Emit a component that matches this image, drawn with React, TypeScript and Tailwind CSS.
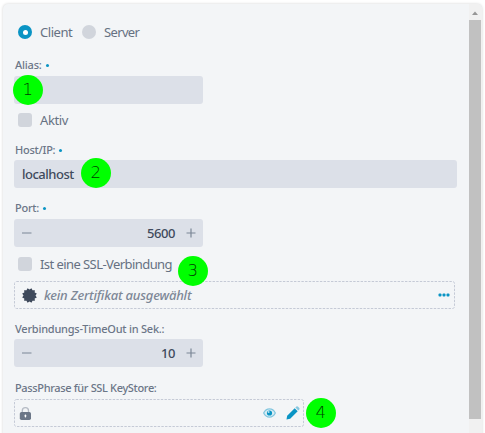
import type { ReactNode } from "react";
import clsx from "clsx";

function Label({ children, required, className }: { children: ReactNode; required?: boolean; className?: string }) {
  return (
    <div className={clsx("flex h-4 items-center whitespace-nowrap pl-px text-[11px] leading-4 font-medium text-[#6b7687]", className)}>
      {children}
      {required && <span className="ml-1 size-[3px] rounded-full bg-[#0a94c4]" />}
    </div>
  );
}

function Badge({ value, className }: { value: number; className: string }) {
  return (
    <span
      className={clsx(
        "absolute flex size-[29.5px] items-center justify-center rounded-full bg-[#00ff00] font-['DejaVu_Sans',sans-serif] text-[16.5px] leading-none font-extralight text-[#003c00]",
        className
      )}
    >
      {value}
    </span>
  );
}

function Stepper({ value }: { value: number }) {
  return (
    <div className="flex h-7 w-[189px] items-center rounded-[3px] bg-[#dce0e8] pr-[7px] pl-2 text-[#7b8695]">
      <svg width="10" height="10" viewBox="0 0 10 10" stroke="currentColor" strokeWidth="1.2">
        <path d="M0 5h9.5" />
      </svg>
      <span className="ml-auto pt-px text-[13px] font-medium tracking-[-0.45px] text-[#3f4a5c]">{value}</span>
      <svg className="ml-[11px]" width="10" height="10" viewBox="0 0 10 10" stroke="currentColor" strokeWidth="1.2">
        <path d="M.5 5h9M5 .5v9" />
      </svg>
    </div>
  );
}

function Checkbox({ label, className }: { label: string; className?: string }) {
  return (
    <div className="flex h-5 items-center pl-1">
      <span className="size-[14px] rounded-[3px] bg-[#d1d5dc]" />
      <span className={clsx("ml-2 pt-px text-[13px] whitespace-nowrap text-[#667182]", className)}>{label}</span>
    </div>
  );
}

function DashedBox({ children, className }: { children: ReactNode; className: string }) {
  return (
    <div className={clsx("relative flex h-7 items-center", className)}>
      <svg className="absolute inset-0 size-full" fill="none" stroke="#c5cad6" strokeDasharray="2.4 1.3">
        <rect x="0.5" y="0.5" rx="2" className="h-[calc(100%-1px)] w-[calc(100%-1px)]" />
      </svg>
      {children}
    </div>
  );
}

// twelve-pointed certificate seal
const seal = Array.from({ length: 24 }, (_, i) => {
  const r = i % 2 ? 6 : 7.6;
  const a = ((i + 1) * Math.PI) / 12;
  return `${7.5 + r * Math.sin(a)},${7.5 - r * Math.cos(a)}`;
}).join(" ");

export default function App() {
  return (
    <div className="h-[433px] w-[485px] overflow-hidden bg-white pt-1 pl-[3px] font-['Noto_Sans',sans-serif]">
      <div className="flex h-[440px] w-[479px] overflow-hidden rounded-[5px] bg-[#f3f5f7] shadow-[0_0_3px_rgba(0,0,0,0.18)]">
        <div className="relative w-[466px] shrink-0 pt-[18px] pl-[11px]">
          {/* Mode */}
          <div className="flex h-5 items-center pl-1 text-[13px] tracking-[-0.44px] text-[#667182]">
            <span className="flex size-[14px] items-center justify-center rounded-full bg-[#0a94c4]">
              <span className="size-[5px] rounded-full bg-white" />
            </span>
            <span className="ml-2 w-[42px] pt-px">Client</span>
            <span className="size-[14px] rounded-full bg-[#d1d5dc]" />
            <span className="ml-2 pt-px tracking-[-0.65px]">Server</span>
          </div>

          <Label required className="mt-[15px] tracking-[-0.2px]">Alias:</Label>
          <div className="mt-[3px] h-7 w-[189px] rounded-[3px] bg-[#dce0e8]" />
          <div className="mt-1.5">
            <Checkbox label="Aktiv" className="tracking-[-0.4px]" />
          </div>

          <Label required className="mt-3 tracking-[-0.25px]">Host/IP:</Label>
          <div className="mt-0.5 flex h-7 w-[443px] items-center rounded-[3px] bg-[#dce0e8] pt-px pl-2 text-[13px] font-medium tracking-[-0.5px] text-[#3f4a5c]">
            localhost
          </div>

          <Label required className="mt-3 tracking-[-0.25px]">Port:</Label>
          <div className="mt-[3px]">
            <Stepper value={5600} />
          </div>
          <div className="mt-[7px] mb-[7px]">
            <Checkbox label="Ist eine SSL-Verbindung" className="tracking-[-0.57px]" />
          </div>

          <DashedBox className="w-[441px]">
            <svg className="ml-2" width="15" height="15" viewBox="0 0 15 15" fill="#3f4a5c">
              <polygon points={seal} />
            </svg>
            <span className="ml-[7px] pt-px text-[13px] font-medium tracking-[-0.2px] whitespace-nowrap text-[#7d8796] italic">
              kein Zertifikat ausgewählt
            </span>
            <svg className="mr-[5px] ml-auto" width="12" height="4" viewBox="0 0 12 4" fill="#0a94c4">
              <rect x="0.5" y="0.5" width="3" height="3" rx="1" />
              <rect x="4.5" y="0.5" width="3" height="3" rx="1" />
              <rect x="8.5" y="0.5" width="3" height="3" rx="1" />
            </svg>
          </DashedBox>

          <Label className="mt-3 tracking-[-0.23px]">Verbindungs-TimeOut in Sek.:</Label>
          <div className="mt-0.5">
            <Stepper value={10} />
          </div>

          <Label className="mt-[13px] mb-[3px] tracking-[-0.35px]">PassPhrase für SSL KeyStore:</Label>
          <DashedBox className="w-[290px]">
            <svg className="ml-[5px]" width="13" height="15" viewBox="0 0 13 15">
              <path d="M3.3 7V4.7a3.1 3.1 0 0 1 6.2 0V7" fill="none" stroke="#b4bac4" strokeWidth="1.3" />
              <rect x="0.8" y="6" width="11.2" height="8" rx="1.7" fill="#6b7687" />
              <rect x="5.7" y="8.5" width="1.5" height="3" rx=".7" fill="#fff" />
            </svg>
            <svg className="ml-auto" width="13" height="10" viewBox="0 0 13 10">
              <path d="M.7 5C3.4-.5 9.6-.5 12.3 5 9.6 10.5 3.4 10.5.7 5Z" fill="#d9edf4" stroke="#84c7df" strokeWidth="1.3" />
              <circle cx="6.5" cy="5" r="2.6" fill="#0a94c4" />
              <circle cx="5.6" cy="4.1" r="1" fill="#b9e0ed" />
            </svg>
            <svg className="mr-[4px] ml-[10px]" width="14" height="14" viewBox="0 0 14 14">
              <path d="M.5 13.4 1.2 9.8 8.7 2.3l3 3-7.5 7.4Z" fill="#0a94c4" />
              <path d="m9.4 1.6 1-1q.8-.6 1.7.1l1.2 1.2q.7.9 0 1.7l-1 1Z" fill="#84c7df" />
            </svg>
          </DashedBox>

          {/* Callouts */}
          <Badge value={1} className="top-[71px] left-[10px]" />
          <Badge value={2} className="top-[154px] left-[78px]" />
          <Badge value={3} className="top-[252px] left-[175px]" />
          <Badge value={4} className="top-[394px] left-[303px]" />
        </div>

        {/* Scrollbar */}
        <div className="flex w-[13px] flex-col items-center bg-[#f1f1f1] pr-px">
          <svg className="mt-[7px] mb-[5px]" width="6" height="4" viewBox="0 0 6 4" fill="#969696">
            <path d="M0 4 3 .5 6 4Z" />
          </svg>
          <div className="h-[399px] w-3 bg-[#c1c1c1]" />
        </div>
      </div>
    </div>
  );
}
